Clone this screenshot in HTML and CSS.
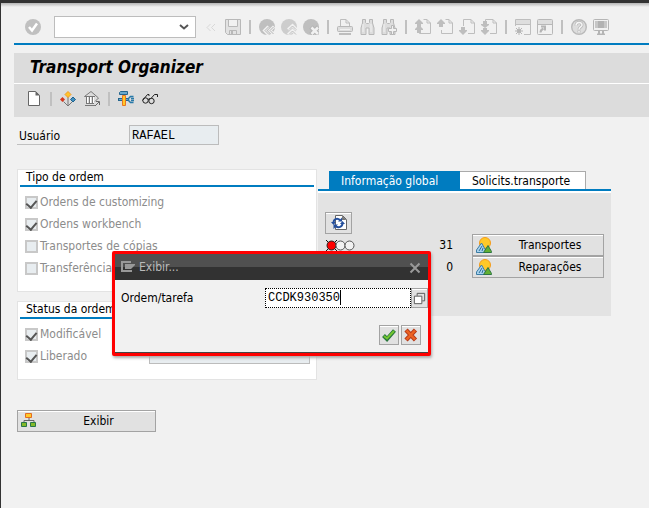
FILE: index.html
```html
<!DOCTYPE html>
<html lang="pt-BR">
<head>
<meta charset="utf-8">
<meta name="viewport" content="width=device-width, initial-scale=1">
<title>Transport Organizer</title>
<link rel="stylesheet" href="styles.css">
</head>
<body>
<svg class="defs" aria-hidden="true">
  <symbol id="page" viewBox="0 0 16 16"><path d="M8.500 .5H12L15.500 4v10.500h-11V11M12 .5V4h3.500" fill="none" stroke="#bebebe"/></symbol>
  <symbol id="up" viewBox="0 0 8 8"><path d="M4 0L8 4v1H6v3H2V5H0V4z" fill="#bebebe"/></symbol>
  <symbol id="picture" viewBox="0 0 16 16">
    <circle cx="9" cy="6" r="5.500" fill="#ffc928" stroke="#f49b1b"/>
    <path d="M.5 15.500V13L5.500 6L11 15.500z" fill="#a9d2ec" stroke="#3a7ca5"/>
    <path d="M3 14l3-5M6 14l1-3" stroke="#2d6f9b"/>
    <path d="M7.500 15.500L12 8.500l3.500 6v1z" fill="#62b032" stroke="#2d7444"/>
  </symbol>
</svg>
<div class="topbar"></div>
<div class="window">
  <nav class="toolbar" aria-label="Barra de sistema">
    <button class="icon" aria-label="Confirmar"><svg viewBox="0 0 16 16"><circle cx="8" cy="8" r="8" fill="#c0c0c0"/><path d="M4 8l3 3.500L12 4.500" fill="none" stroke="#fff" stroke-width="2.500"/></svg></button>
    <span class="combo"><input type="text" aria-label="Comando"><svg viewBox="0 0 10 6"><path d="M1 1l4 3.500L9 1" fill="none" stroke="#555" stroke-width="2"/></svg></span>
    <button class="icon" aria-label="Recolher"><svg viewBox="0 0 16 16"><path d="M7.500 5L4 8.500L7.500 12M12 5L8.500 8.500L12 12" fill="none" stroke="#d8d8d8"/></svg></button>
    <button class="icon" aria-label="Gravar"><svg viewBox="0 0 16 16"><path d="M.5.500h15v15H2.500l-2-2zM3.500.500v7h9v-7M4.500 15.500v-4h7v4" fill="#e2e2e2" stroke="#b8b8b8"/><path d="M4 1h8v6H4z" fill="#f1f1f1"/><path d="M6 12h2v3H6z" fill="#b8b8b8"/></svg></button>
    <i class="sep"></i>
    <button class="icon" aria-label="Voltar"><svg viewBox="0 0 16 16"><circle cx="8" cy="8" r="8" fill="#bfbfbf"/><path d="M9.500 7.500L5.500 11.500l4 4M15 7.500l-4 4 4 4" fill="none" stroke="#f1f1f1" stroke-width="3"/><path d="M9.500 8L6 11.500 9.500 15M14.500 8L11 11.500l3.500 3.500" fill="none" stroke="#b5b5b5"/></svg></button>
    <button class="icon" aria-label="Encerrar"><svg viewBox="0 0 16 16"><circle cx="8" cy="8" r="8" fill="#cdcdcd"/><path d="M7 10.500l4.500-4 4 4M7 15.500l4.500-4 4 4" fill="none" stroke="#f1f1f1" stroke-width="3"/><path d="M8 10.500l3.500-3.500 3.500 3.500M8 15.500l3.500-3.500 3.500 3.500" fill="none" stroke="#bdbdbd"/></svg></button>
    <button class="icon" aria-label="Cancelar"><svg viewBox="0 0 16 16"><circle cx="8" cy="8" r="8" fill="#bfbfbf"/><path d="M8 8l7.500 7.500M15.500 8L8 15.500" stroke="#b5b5b5" stroke-width="5"/><path d="M8.500 8.500l6.500 6.500M15 8.500L8.500 15" stroke="#f1f1f1" stroke-width="2.500"/></svg></button>
    <i class="sep"></i>
    <button class="icon" aria-label="Imprimir"><svg viewBox="0 0 16 16"><path d="M3.500 7V.500H9L12.500 4v3" fill="#f1f1f1" stroke="#bdbdbd"/><path d="M9 .500V4h3.500" fill="none" stroke="#bdbdbd"/><rect x=".5" y="7.500" width="15" height="5" rx="1" fill="#ddd" stroke="#b8b8b8"/><path d="M3 10.500h10" stroke="#f1f1f1"/><path d="M2 15h12" stroke="#bdbdbd" stroke-width="2"/></svg></button>
    <button class="icon" aria-label="Procurar"><svg viewBox="0 0 16 16"><path d="M3.500.500h3v3l1 1h2l1-1v-3h3V4l1.500 5v6.500h-5V9h-3v6.500h-5V9L3.500 4z" fill="#ddd" stroke="#b7b7b7"/><path d="M4 5v8M12 5v8" stroke="#f1f1f1"/></svg></button>
    <button class="icon" aria-label="Continuar procura"><svg viewBox="0 0 16 16"><path d="M2.500.500h3v3l1 1h2l1-1v-3h3V4l1.500 5v6.500h-5V9h-3v6.500h-5V9L2.500 4z" fill="#ddd" stroke="#b7b7b7"/><path d="M3 5v8" stroke="#f1f1f1"/><path d="M10.500 6.500h2v3h3v3h-3v3h-2v-3h-3v-3h3z" fill="#f1f1f1" stroke="#b7b7b7"/></svg></button>
    <i class="sep"></i>
    <button class="icon" aria-label="Primeira página"><svg viewBox="0 0 16 16"><use href="#page" width="16" height="16"/><use href="#up" width="8" height="8"/><use href="#up" y="6" width="8" height="8"/></svg></button>
    <button class="icon" aria-label="Página anterior"><svg viewBox="0 0 16 16"><use href="#page" width="16" height="16"/><use href="#up" width="8" height="8"/></svg></button>
    <button class="icon" aria-label="Página seguinte"><svg viewBox="0 0 16 16"><path d="M4.500 7V.500H12L15.500 4v10.500H9M12 .500V4h3.500" fill="none" stroke="#bebebe"/><path d="M2 8h4v3h2v1l-4 4-4-4v-1h2z" fill="#bebebe"/></svg></button>
    <button class="icon" aria-label="Última página"><svg viewBox="0 0 16 16"><path d="M4.500 2V.500H12L15.500 4v10.500H9M12 .500V4h3.500" fill="none" stroke="#bebebe"/><path d="M2 2h4v3h2v1l-4 3-4-3V5h2zM2 9h4v2h2v1l-4 4-4-4v-1h2z" fill="#bebebe"/></svg></button>
    <i class="sep"></i>
    <button class="icon" aria-label="Criar modo"><svg viewBox="0 0 16 16"><path d="M.5 7V.500h15v15H9" fill="none" stroke="#bebebe"/><path d="M1 1h14v4H1z" fill="#dedede"/><path d="M1 5.500h14" stroke="#bebebe"/><path d="M4 8v8M0 12h8M1 9l6 6M7 9l-6 6" stroke="#b5b5b5"/><circle cx="4" cy="12" r="2" fill="#b5b5b5"/></svg></button>
    <button class="icon" aria-label="Criar atalho"><svg viewBox="0 0 16 16"><rect x=".5" y=".5" width="15" height="15" rx="1" fill="none" stroke="#b8b8b8"/><path d="M1 1h14v4H1z" fill="#dedede"/><path d="M1 5.500h14" stroke="#b8b8b8"/><path d="M3.500 13.500c0-2 1-3 3-4M4 7.500h4v4" fill="none" stroke="#b5b5b5" stroke-width="2"/></svg></button>
    <i class="sep"></i>
    <button class="icon" aria-label="Ajuda"><svg viewBox="0 0 16 16"><circle cx="8" cy="8" r="7.300" fill="#ddd" stroke="#b9b9b9" stroke-width="1.400"/><path d="M5 6.500C5 2.500 11 2.500 11 6c0 2-3 2-3 4.500M8 11.500v2" fill="none" stroke="#b9b9b9" stroke-width="3"/><path d="M5 6.500C5 2.500 11 2.500 11 6c0 2-3 2-3 4.500M8 12v1.500" fill="none" stroke="#f5f5f5" stroke-width="1.500"/></svg></button>
    <button class="icon" aria-label="Layout local"><svg viewBox="0 0 16 16"><rect x=".5" y=".5" width="15" height="11" rx="1" fill="#f1f1f1" stroke="#b5b5b5"/><path d="M2 2h12v7H2z" fill="#c7c7c7"/><path d="M5 2h6v7H5z" fill="#b2b2b2"/><path d="M6 12v3M10 12v3M4 15.500h8" stroke="#b5b5b5" stroke-width="2"/></svg></button>
  </nav>

  <header class="title"><h1>Transport Organizer</h1></header>
  <nav class="apptools" aria-label="Barra de aplicação">
    <button class="icon" aria-label="Criar"><svg viewBox="0 0 16 16"><path d="M2.500 .5h7l4 4v10h-11z" fill="#fff" stroke="#666"/><path d="M9.500 0v4.500H14z" fill="#666"/></svg></button>
    <i class="sep"></i>
    <button class="icon" aria-label="Transportar"><svg viewBox="0 0 16 16"><path d="M8 6v9M3.500 10.500L8 15l4.500-4.500" fill="none" stroke="#777"/><path d="M8 .500L11 3.500l-3 3-3-3z" fill="#ffc42b" stroke="#f39a20"/><path d="M2.500 6L5 8.500 2.500 11 0 8.500z" fill="#d7391e"/><path d="M13 6l2.500 2.500L13 11l-2.500-2.500z" fill="#438fbd" stroke="#1c6390"/></svg></button>
    <button class="icon" aria-label="Liberar"><svg viewBox="0 0 16 16"><path d="M.5 5.500L7 .500 14.500 7 11 10.500M.500 5.500H11M1 14.500h10M2 12.500h8" fill="none" stroke="#777"/><path d="M2.500 6v6M5.500 6v6M8.500 6v6" stroke="#777"/><path d="M3.500 6v6M6.500 6v6M9.500 6v6" stroke="#fff"/><path d="M11 15l4-4M12 10.500h3.500V14" fill="none" stroke="#666"/></svg></button>
    <i class="sep"></i>
    <button class="icon" aria-label="Ferramentas"><svg viewBox="0 0 16 16"><path d="M0 8.500h11" stroke="#25658d" stroke-width="3"/><path d="M1 8.500h10" stroke="#69a9cd"/><path d="M15.500 5.500h-3l-2 2v2l2 2h3M13 7.500h3M13 9.500h3" fill="none" stroke="#2879a8" stroke-width="1.500"/><path d="M1.500 3.500V1.500L2.500 .500h7v3z" fill="#69a9cd" stroke="#25658d"/><path d="M4.500 4.500h3v10h-3z" fill="#ffc928" stroke="#e87722"/></svg></button>
    <button class="icon" aria-label="Exibir objeto"><svg viewBox="0 0 16 16"><path d="M.5 9.500L5.500 3.500H7V5M8.500 8L12.500 3.500h3V6M6 8.500l2-1" fill="none" stroke="#222"/><circle cx="3.500" cy="9.500" r="2.700" fill="none" stroke="#222"/><circle cx="9.500" cy="10" r="2.700" fill="none" stroke="#222"/></svg></button>
  </nav>

  <main>
    <div class="user"><label for="user">Usuário</label><input id="user" class="mono" type="text" value="RAFAEL" readonly></div>
    <div class="columns">
      <div class="left">
        <section class="group">
          <h2>Tipo de ordem</h2>
          <label class="check"><input type="checkbox" checked disabled>Ordens de customizing</label>
          <label class="check"><input type="checkbox" checked disabled>Ordens workbench</label>
          <label class="check"><input type="checkbox" disabled>Transportes de cópias</label>
          <label class="check"><input type="checkbox" disabled>Transferência</label>
        </section>
        <section class="group">
          <h2>Status da ordem</h2>
          <label class="check"><input type="checkbox" checked disabled>Modificável</label>
          <div class="status"><label class="check"><input type="checkbox" checked disabled>Liberado</label><input class="date" type="text" aria-label="Período" readonly></div>
        </section>
      </div>
      <section class="right">
        <div class="tabs" role="tablist"><button class="tab active" role="tab" aria-selected="true">Informação global</button><button class="tab" role="tab" aria-selected="false">Solicits.transporte</button></div>
        <div class="panel">
          <button class="btn refresh" aria-label="Atualizar"><svg viewBox="0 0 16 16"><path d="M4.500.500h7l4 4v10h-11z" fill="#fff" stroke="#666"/><path d="M11 .500V5h4.500z" fill="#777"/><path d="M2.500 8C2.500 4 6 2.500 9 5M11.500 8c0 4-4 5.500-7 3" fill="none" stroke="#244f9c" stroke-width="2"/><path d="M7 6.500h4V2.500zM7 9.500H2.500V14zM0 7h5L2.500 10zM9 9h5l-2.500-3z" fill="#244f9c"/></svg></button>
          <div class="row"><svg class="lights" viewBox="0 0 31 13" role="img" aria-label="Vermelho"><path d="M1 1l11 11M12 1L1 12" stroke="#111"/><circle cx="6.500" cy="6.500" r="4.500" fill="red" stroke="#222"/><circle cx="15.500" cy="6.500" r="4.500" fill="#f1f1f1" stroke="#555"/><circle cx="24.500" cy="6.500" r="4.500" fill="#f1f1f1" stroke="#555"/></svg><output>31</output><button class="btn"><svg viewBox="0 0 16 16"><use href="#picture"/></svg><span>Transportes</span></button></div>
          <div class="row"><output>0</output><button class="btn"><svg viewBox="0 0 16 16"><use href="#picture"/></svg><span>Reparações</span></button></div>
        </div>
      </section>
    </div>
    <button class="btn show"><svg viewBox="0 0 16 16"><path d="M8 5v3M3 11V7.500h10V11" fill="none" stroke="#666"/><path d="M4.500 .5h6v4h-6z" fill="#ffc928" stroke="#e36b23"/><path d="M.5 9.500h5v4h-5zM9.500 9.500h5v4h-5z" fill="#83b927" stroke="#287549"/></svg><span>Exibir</span></button>
  </main>
</div>

<div class="dialog" role="dialog" aria-labelledby="dlg-title">
  <header><svg viewBox="0 0 16 16"><path d="M11 3H2v9h9v-1" fill="none" stroke="#999" stroke-width="2"/><path d="M5 5h10v1l-4 4H5z" fill="#999"/></svg><h2 id="dlg-title">Exibir...</h2><button class="icon" aria-label="Fechar"><svg viewBox="0 0 16 16"><path d="M3.500 4.500l9 9M12.500 4.500l-9 9" stroke="#999" stroke-width="2"/></svg></button></header>
  <div class="field"><label for="order">Ordem/tarefa</label><span class="entry"><input id="order" class="mono" type="text" value="CCDK930350"><i class="caret"></i></span><button class="btn help" aria-label="Ajuda de pesquisa"><svg viewBox="0 0 16 16"><path d="M5.500 5V2.500h8v8H11" fill="none" stroke="#555"/><path d="M2.500 5.500h8v8h-8z" fill="#fff" stroke="#555"/></svg></button></div>
  <footer><button class="btn small" aria-label="Avançar"><svg viewBox="0 0 16 16"><path d="M2.500 8.500L6 12l7.500-8.500" fill="none" stroke="#28763c" stroke-width="4"/><path d="M3 9l3 2.500L13 4" fill="none" stroke="#73c62f" stroke-width="2"/></svg></button><button class="btn small" aria-label="Cancelar"><svg viewBox="0 0 16 16"><path d="M3 3l9.500 10M12.500 3L3 13" stroke="#b83a18" stroke-width="4.500"/><path d="M3.500 3.500l8.500 9M12 3.500l-8.500 9" stroke="#ec6322" stroke-width="2.500"/></svg></button></footer>
</div>
</body>
</html>
```

FILE: styles.css
```css
* { box-sizing: border-box; }
body {
  margin: 0;
  min-height: 100vh;
  border-left: 1px solid #333;
  background: #f1f1f1;
  color: #000;
  font: 12px/16px "DejaVu Sans Condensed", "Noto Sans", sans-serif;
}
button, input { font: inherit; color: inherit; margin: 0; padding: 0; }
h1, h2 { margin: 0; font-weight: normal; }
svg { display: block; flex: none; }
.defs { position: absolute; width: 0; height: 0; }
.topbar { height: 7px; border-top: 3px solid #333; background: linear-gradient(#b5b5b5, #f1f1f1); }
.window { padding-left: 13px; }

.icon { width: 16px; height: 16px; border: 0; background: none; flex: none; }
.icon svg { width: 16px; height: 16px; }
.sep { flex: none; width: 2px; height: 14px; background: #c0c0c0; }

.toolbar {
  display: flex;
  align-items: center;
  gap: 6px;
  height: 38px;
  padding: 4px 0 0 11px;
  border-bottom: 2px solid #007cc0;
}
.toolbar .sep { margin: 0 2px; }
.combo {
  display: flex;
  align-items: center;
  width: 142px;
  height: 22px;
  margin: 0 1px 0 7px;
  padding-right: 6px;
  border: 1px solid #bdbdbd;
  background: #fff;
}
.combo input { flex: 1; min-width: 0; border: 0; outline: 0; background: none; }
.combo svg { width: 10px; height: 6px; }

.title {
  margin-top: 8px;
  height: 31px;
  padding: 4px 16px;
  background: #dcdcdc;
  border-bottom: 1px solid #fff;
}
.title h1 { font-size: 17px; line-height: 20px; font-weight: bold; font-style: italic; }
.apptools {
  display: flex;
  align-items: center;
  gap: 8px;
  height: 33px;
  padding: 0 12px 3px;
  background: #dcdcdc;
}

main { padding: 8px 38px 8px 3px; }
.mono { font: 12px/16px "Liberation Mono", monospace; }
.user { display: flex; height: 20px; }
.user label { width: 112px; padding: 3px 2px 0; border-bottom: 1px solid #c0c0c0; }
.user input { width: 90px; padding: 2px 2px 0; border: 1px solid #bcbcbc; background: #e8edf0; outline: 0; }

.columns { display: flex; gap: 1px; margin-top: 24px; align-items: flex-start; }
.left { flex: 300; min-width: 0; display: grid; gap: 9px; }
.group { border: 1px solid #e3e3e3; background: #fff; padding: 0 2px 12px; }
.group h2 { font-size: 12px; line-height: 15px; padding-left: 6px; border-bottom: 2px solid #007cc0; margin-bottom: 4px; }
.check { display: flex; align-items: center; gap: 2px; height: 22px; padding-left: 5px; color: #8c8c8c; white-space: nowrap; }
.check input {
  appearance: none;
  width: 13px;
  height: 13px;
  border: 2px solid #c8c8c8;
  background: #e8edf0;
  display: flex;
  align-items: flex-start;
  justify-content: center;
}
.check input:checked::before {
  content: "";
  width: 5px;
  height: 8px;
  border: solid #555;
  border-width: 0 2px 2px 0;
  transform: rotate(40deg);
}
.status { display: flex; }
.status .check { width: 129px; }
.date { width: 161px; height: 19px; border: 1px solid #bcbcbc; background: #e8edf0; outline: 0; }

.right { flex: 293; min-width: 0; padding-top: 2px; }
.tabs { display: flex; padding-left: 11px; border-bottom: 2px solid #007cc0; }
.tab { height: 18px; border: 1px solid #aaa; border-width: 1px 1px 0 0; background: #fff; padding: 0 12px; white-space: nowrap; width: 126px; text-align: left; }
.tab.active { width: 131px; background: #007cc0; border-color: #007cc0; color: #fff; }
.panel { border-top: 2px solid #fff; background: #e3e3e3; padding: 19px 7px 38px; }
.row { display: flex; align-items: center; height: 22px; }
.row output { margin-left: auto; width: 40px; text-align: right; margin-right: 19px; }
.row .btn { width: 132px; }
.lights { width: 31px; height: 13px; }

.btn {
  display: flex;
  align-items: center;
  height: 22px;
  padding: 0 3px;
  border: 1px solid #a3a3a3;
  box-shadow: inset 0 1px #fff;
  background: #e1e1e1;
}
.btn svg { width: 16px; height: 16px; }
.btn span { flex: 1; padding-left: 8px; text-align: center; }
.refresh { width: 27px; padding: 0 5px; }
.show { width: 139px; margin-top: 30px; }

.dialog {
  position: absolute;
  left: 112px;
  top: 251px;
  width: 319px;
  border: 3px solid #f00;
  border-radius: 2px;
  background: #f1f1f1;
  box-shadow: inset 0 -1px #444, 1px 2px 3px #aaa;
}
.dialog header {
  display: flex;
  align-items: center;
  height: 26px;
  padding: 0 5px;
  background: linear-gradient(#505050 50%, #323232 50%);
  color: #bbb;
}
.dialog header h2 { flex: 1; padding-left: 3px; font-size: 12px; }
.dialog header svg { width: 16px; height: 16px; }
.field { display: flex; align-items: center; height: 36px; padding-left: 6px; }
.field label { flex: 1; }
.entry { display: flex; align-items: center; position: relative; width: 146px; height: 20px; border: 1px dotted #000; background: #fff; }
.entry input { width: 100%; border: 0; padding-left: 2px; outline: 0; background: none; }
.caret { position: absolute; left: 74px; top: 1px; width: 1px; height: 15px; background: #000; }
.help { width: 17px; height: 20px; padding: 0; }
.help svg { width: 15px; height: 15px; }
.dialog footer { display: flex; justify-content: flex-end; gap: 2px; padding: 9px 7px 8px; }
.small { width: 20px; height: 20px; padding: 0 1px; }
```
